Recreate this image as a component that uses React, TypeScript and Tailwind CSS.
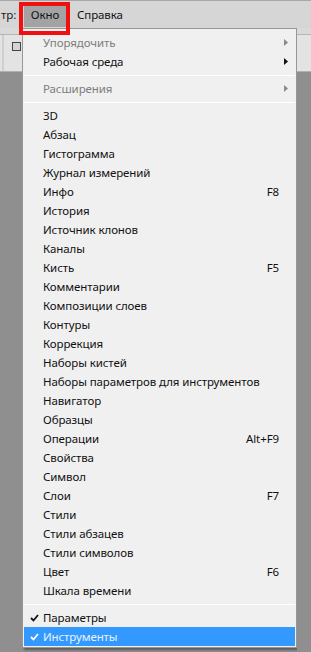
import React from 'react';

type Item =
  | { kind: 'item'; label: string; shortcut?: string; disabled?: boolean; submenu?: boolean; checked?: boolean; active?: boolean }
  | { kind: 'sep' };

const items: Item[] = [
  { kind: 'item', label: 'Упорядочить', disabled: true, submenu: true },
  { kind: 'item', label: 'Рабочая среда', submenu: true },
  { kind: 'sep' },
  { kind: 'item', label: 'Расширения', disabled: true, submenu: true },
  { kind: 'sep' },
  { kind: 'item', label: '3D' },
  { kind: 'item', label: 'Абзац' },
  { kind: 'item', label: 'Гистограмма' },
  { kind: 'item', label: 'Журнал измерений' },
  { kind: 'item', label: 'Инфо', shortcut: 'F8' },
  { kind: 'item', label: 'История' },
  { kind: 'item', label: 'Источник клонов' },
  { kind: 'item', label: 'Каналы' },
  { kind: 'item', label: 'Кисть', shortcut: 'F5' },
  { kind: 'item', label: 'Комментарии' },
  { kind: 'item', label: 'Композиции слоев' },
  { kind: 'item', label: 'Контуры' },
  { kind: 'item', label: 'Коррекция' },
  { kind: 'item', label: 'Наборы кистей' },
  { kind: 'item', label: 'Наборы параметров для инструментов' },
  { kind: 'item', label: 'Навигатор' },
  { kind: 'item', label: 'Образцы' },
  { kind: 'item', label: 'Операции', shortcut: 'Alt+F9' },
  { kind: 'item', label: 'Свойства' },
  { kind: 'item', label: 'Символ' },
  { kind: 'item', label: 'Слои', shortcut: 'F7' },
  { kind: 'item', label: 'Стили' },
  { kind: 'item', label: 'Стили абзацев' },
  { kind: 'item', label: 'Стили символов' },
  { kind: 'item', label: 'Цвет', shortcut: 'F6' },
  { kind: 'item', label: 'Шкала времени' },
  { kind: 'sep' },
  { kind: 'item', label: 'Параметры', checked: true },
  { kind: 'item', label: 'Инструменты', checked: true, active: true },
];

function Check({ color }: { color: string }) {
  return (
    <svg width="9" height="8" viewBox="0 0 9 8">
      <path d="M1 4 L3.5 6.5 L8 1" fill="none" stroke={color} strokeWidth="1.8" />
    </svg>
  );
}

function Arrow({ color }: { color: string }) {
  return (
    <svg width="4" height="7" viewBox="0 0 4 7">
      <path d="M0 0 L4 3.5 L0 7 Z" fill={color} />
    </svg>
  );
}

export default function App() {
  return (
    <div
      className="relative w-[311px] h-[652px] overflow-hidden bg-[#8f8f8f] text-[11.5px] tracking-[-0.1px] text-black flex flex-col"
      style={{ fontFamily: '"Noto Sans", "DejaVu Sans", sans-serif' }}
    >
      {/* Menu bar */}
      <div className="h-[28px] shrink-0 bg-[#d6d6d6] border-t border-[#a8a8a8] flex items-center">
        <span className="w-[19px] pl-[1px] text-[#1a1a1a]">тр:</span>
        <span className="ml-[5px] h-[24px] w-[42px] bg-[#a3a3a3] flex items-center justify-center text-[#111]">Окно</span>
        <span className="ml-[11px] text-[#111]">Справка</span>
      </div>

      <div className="flex flex-1 min-h-0">
        {/* Left strip: options bar */}
        <div className="w-[22px] shrink-0 flex flex-col">
          <div className="h-[7px] bg-[#d9d9d9] border-b border-[#b5b5b5]" />
          <div className="h-[37px] bg-[#e3e3e3] border-b border-[#b0b0b0] flex items-start">
            <div className="w-[2px] h-full ml-[2px] bg-[#cfcfcf]" />
            <div className="mt-[7px] ml-[8px] w-[9px] h-[9px] border border-[#444] bg-[#d4d4d4]" />
          </div>
          <div className="flex-1 bg-[#8f8f8f]" />
        </div>

        {/* Dropdown */}
        <div className="w-[275px] shrink-0 h-[620px] bg-[#f0f0f0] border border-[#979797] shadow-[2px_2px_2px_rgba(0,0,0,0.35)] pt-[4px] px-[1px] flex flex-col">
          {items.map((it, i) =>
            it.kind === 'sep' ? (
              <div key={i} className="h-[8px] flex items-center">
                <div className="w-full h-px bg-[#c7c7c7] border-b border-white" />
              </div>
            ) : (
              <div
                key={i}
                className={`h-[19px] flex items-center ${it.active ? 'bg-[#3399ff]' : ''} ${
                  it.disabled ? 'text-[#7d7d7d]' : it.active ? 'text-[#e8f2ff]' : 'text-[#111]'
                }`}
              >
                <div className="w-[18px] shrink-0 flex items-center justify-center pl-[3px]">
                  {it.checked && <Check color={it.active ? '#ffffff' : '#111111'} />}
                </div>
                <span className="ml-[1px] flex-1 whitespace-nowrap">{it.label}</span>
                {it.shortcut && <span className="mr-[16px] whitespace-nowrap">{it.shortcut}</span>}
                {it.submenu && (
                  <span className="mr-[7px] flex items-center">
                    <Arrow color={it.disabled ? '#8a8a8a' : '#111111'} />
                  </span>
                )}
              </div>
            )
          )}
        </div>

        {/* Right strip */}
        <div className="flex-1 flex flex-col">
          <div className="h-[7px] bg-[#d9d9d9] border-b border-[#b5b5b5]" />
          <div className="h-[37px] bg-[#e3e3e3] border-b border-[#b0b0b0]" />
          <div className="flex-1 bg-[#8f8f8f]" />
        </div>
      </div>

      {/* Red annotation box */}
      <div className="absolute left-[19px] top-[2px] w-[51px] h-[33px] border-[4px] border-[#f01010]" />
    </div>
  );
}
